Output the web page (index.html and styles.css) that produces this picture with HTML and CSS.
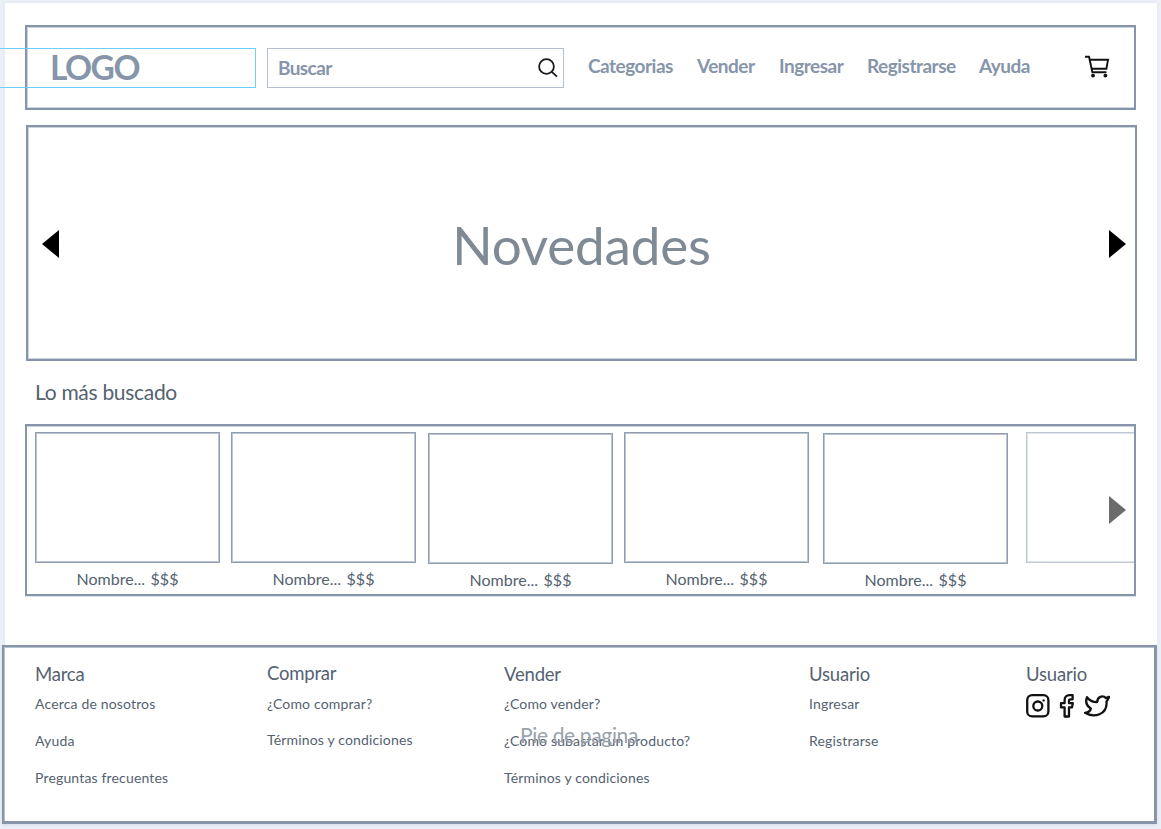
FILE: index.html
```html
<!DOCTYPE html>
<html lang="es">
<head>
<meta charset="utf-8">
<title>Novedades</title>
<link rel="stylesheet" href="styles.css">
</head>
<body>
<div class="page">
  <header class="header">
    <div class="logo"><span>LOGO</span></div>
    <div class="search">
      <span class="search-label">Buscar</span>
      <svg class="search-icon" width="22" height="22" viewBox="0 0 22 22"><circle cx="9.5" cy="9.5" r="7.4"/><path d="M14.8 14.8L20 19.6"/></svg>
    </div>
    <nav class="nav">
      <a class="nav-categories">Categorias</a>
      <a class="nav-sell">Vender</a>
      <a class="nav-login">Ingresar</a>
      <a class="nav-register">Registrarse</a>
      <a class="nav-help">Ayuda</a>
    </nav>
    <svg class="cart" width="26" height="24" viewBox="0 0 26 24"><path d="M1 1.8H5L8.4 17.3H22.5M5.7 4.8H24L22.4 13.8H7.6"/><circle class="wheel" cx="9" cy="20.6" r="1.9"/><circle class="wheel" cx="21.4" cy="20.6" r="1.9"/></svg>
  </header>

  <section class="banner">
    <svg width="18" height="28" viewBox="0 0 18 28"><path d="M17 0V28L0 14Z"/></svg>
    <h1>Novedades</h1>
    <svg width="18" height="28" viewBox="0 0 18 28"><path d="M1 0V28L18 14Z"/></svg>
  </section>

  <h2 class="section-title">Lo más buscado</h2>

  <section class="products">
    <article class="product"><div class="photo"></div><p>Nombre...&nbsp; $$$</p></article>
    <article class="product"><div class="photo"></div><p>Nombre...&nbsp; $$$</p></article>
    <article class="product lower"><div class="photo"></div><p>Nombre...&nbsp; $$$</p></article>
    <article class="product"><div class="photo"></div><p>Nombre...&nbsp; $$$</p></article>
    <article class="product lower fifth"><div class="photo"></div><p>Nombre...&nbsp; $$$</p></article>
    <article class="product faded"><div class="photo"></div></article>
    <svg class="next" width="18" height="28" viewBox="0 0 18 28"><path d="M1 0V28L18 14Z"/></svg>
  </section>
</div>

<footer class="footer">
  <span class="footer-label">Pie de pagina</span>
  <div class="col brand"><h3>Marca</h3><a>Acerca de nosotros</a><a>Ayuda</a><a>Preguntas frecuentes</a></div>
  <div class="col buy"><h3>Comprar</h3><a>¿Como comprar?</a><a>Términos y condiciones</a></div>
  <div class="col sell"><h3>Vender</h3><a>¿Como vender?</a><a>¿Cómo subastar un producto?</a><a>Términos y condiciones</a></div>
  <div class="col user"><h3>Usuario</h3><a>Ingresar</a><a>Registrarse</a></div>
  <div class="col social"><h3>Usuario</h3>
    <div class="icons">
      <svg width="24" height="24" viewBox="0 0 24 24"><rect x="1.2" y="1.2" width="21.2" height="21.2" rx="5"/><circle cx="11.8" cy="12" r="4.5"/><circle class="dot" cx="17.6" cy="6.4" r="1.2"/></svg>
      <svg width="16" height="24" viewBox="0 0 16 24"><path d="M13.6 1.2H10.6C7.3 1.2 5.6 3.2 5.6 6.2V9.2H2V13.4H5.6V22.5H10V13.4H13L13.8 9.2H10V6.7C10 5.8 10.4 5.3 11.3 5.3H13.6Z"/></svg>
      <svg width="26" height="24" viewBox="0 0 26 24"><path d="M25 2.8C23.8 3.6 22.8 3.8 21.9 4.1C18.9 .9 13.2 2.6 13.2 8.1C8.7 8.2 5.4 6.5 3 3.2C1.4 7.3 2.3 11.5 6.8 14.5C6.4 17 3.9 18.6 1 18.8C10.5 24.5 22.6 20.3 22.6 9.2C22.6 8.7 22.6 8.1 22.5 7.5C23.6 6.3 24.5 4.9 25 2.8Z"/></svg>
    </div>
  </div>
</footer>
</body>
</html>
```
FILE: styles.css
```css
* { box-sizing: border-box; }
body {
  margin: 0;
  height: 829px;
  padding-top: 3px;
  overflow: hidden;
  background: #ebf0f7;
  font-family: Lato, "Liberation Sans", sans-serif;
  color: #556270;
}
h1, h2, h3, p { margin: 0; font-weight: 400; }
svg { display: block; flex: none; }

.page {
  width: 1152px;
  height: 642px;
  margin-left: 5px;
  padding: 22px 20px 0;
  background: #fff;
  box-shadow: 0 0 3px #dce2ec;
}
.header {
  display: flex;
  width: 1111px;
  height: 85px;
  padding-top: 21px;
  border: 2px solid #8795aa;
  box-shadow: inset 1px 1px #ccd3de, inset 0 -1px #ccd3de;
  color: #8795aa;
}
.logo {
  flex: none;
  width: 286px;
  height: 40px;
  margin-left: -57px;
  padding-left: 79px;
  border: 1px solid #71cdf9;
  font-size: 33.5px;
  font-weight: 700;
  line-height: 37px;
  letter-spacing: -1.5px;
}
.search {
  display: flex;
  flex: none;
  justify-content: space-between;
  width: 297px;
  height: 40px;
  margin-left: 11px;
  padding: 0 4px 0 10px;
  border: 1px solid #b5bfcf;
  font-size: 19px;
  font-weight: 700;
  line-height: 37px;
  letter-spacing: -0.6px;
}
.search-icon { margin-top: 8px; fill: none; stroke: #16191d; stroke-width: 1.8; }
.nav {
  display: flex;
  flex: none;
  width: 496px;
  margin-left: 24px;
  font-size: 19px;
  font-weight: 700;
  line-height: 36px;
  letter-spacing: -0.5px;
  white-space: nowrap;
}
.nav-categories { width: 109px; }
.nav-sell { width: 82px; }
.nav-login { width: 88px; }
.nav-register { width: 112px; }
.cart { margin-top: 7px; fill: none; stroke: #111; stroke-width: 1.9; }
.cart .wheel { fill: #111; stroke: none; }

.banner {
  display: flex;
  align-items: center;
  justify-content: space-between;
  width: 1111px;
  height: 236px;
  margin: 15px 0 0 1px;
  padding: 2px 9px 0 14px;
  border: 2px solid #8795aa;
  box-shadow: inset 1px 1px #ccd3de, inset 0 -1px #ccd3de;
}
.banner h1 { padding: 2px 5px 0 0; font-size: 53px; line-height: 60px; letter-spacing: -0.2px; color: #808a94; }
.section-title {
  height: 63px;
  padding-left: 10px;
  font-size: 21px;
  line-height: 61px;
  letter-spacing: -0.3px;
}
.products {
  position: relative;
  display: flex;
  gap: 11px;
  width: 1111px;
  height: 172px;
  padding: 6px 0 0 8px;
  border: 2px solid #8795aa;
  box-shadow: inset 0 1px #ccd3de, 0 1px #dce1e8;
  overflow: hidden;
}
.product { flex: none; width: 185px; }
.product.lower { margin: 1px 0 0 1px; }
.product.fifth { margin-left: 3px; }
.product.faded { margin-left: 7px; }
.photo { height: 131px; border: 1px solid #8f9db1; box-shadow: inset 0 0 0 1px #bcc5d1; }
.faded .photo { border-color: #bfc8d5; box-shadow: inset 0 0 0 1px #e0e4eb; }
.product p { font-size: 16px; line-height: 32px; text-align: center; word-spacing: -1.3px; }
.next { position: absolute; right: 8px; top: 70px; fill: #6b6b6b; }

.footer {
  position: relative;
  display: flex;
  width: 1155px;
  height: 179px;
  margin-left: 2px;
  padding: 14px 0 0 30px;
  border: 2px solid #8795aa;
  border-width: 2px 3px 3px 2px;
  background: #fff;
  box-shadow: inset 1px 1px #b7c1ce, 0 1px 3px #d3dae6;
}
.col { display: flex; flex-direction: column; flex: none; padding-left: 1px; white-space: nowrap; }
.col h3 { font-size: 18.5px; line-height: 27px; letter-spacing: -0.2px; }
.col a { font-size: 14px; line-height: 37px; letter-spacing: 0.16px; }
.col h3 + a { margin-top: -3px; }
.brand { width: 232px; }
.buy { width: 237px; margin-top: -1px; }
.buy a { line-height: 36px; }
.buy h3 + a { margin-top: -1px; }
.sell { width: 305px; }
.user { width: 217px; }
.footer-label {
  position: absolute;
  left: 516px;
  top: 75px;
  font-size: 21px;
  line-height: 26px;
  letter-spacing: -0.35px;
  color: #9aa2aa;
}
.icons { display: flex; gap: 9px; margin-top: 6px; fill: none; stroke: #111; stroke-width: 2.3; stroke-linejoin: round; }
.icons .dot { fill: #111; stroke: none; }
```
